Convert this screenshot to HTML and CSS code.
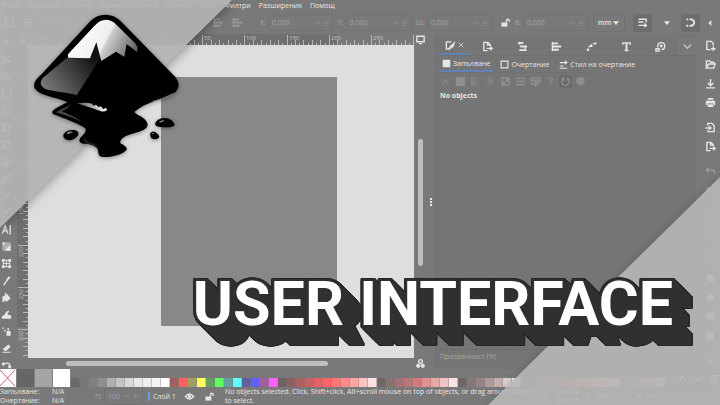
FILE: index.html
```html
<!DOCTYPE html>
<html lang="bg">
<head>
<meta charset="utf-8">
<title>User interface</title>
<link rel="stylesheet" href="styles.css">
</head>
<body>
<svg class="defs" aria-hidden="true">
  <symbol id="doc" viewBox="0 0 12 12"><path d="M6 10.500H2V1.500H6.500L9 4V5.500M6 1.500V4.500H9M5 8H11M9 6L11 8L9 10"/></symbol>
  <symbol id="newdoc" viewBox="0 0 12 12"><path d="M6 10.500H2V1.500H7L9 3.500V6M9 7V12M6.500 9.500H11.500"/></symbol>
  <symbol id="import" viewBox="0 0 12 12"><path d="M3 4V1.500H7.500L10 4V10.500H3V9M0.500 6.500H6M4.500 4.500L6.500 6.500L4.500 8.500"/></symbol>
  <symbol id="folder" viewBox="0 0 12 12"><path d="M1.500 10V2H5L6 3.500H9.500V5M1.500 10L4 5.500H11L9.500 10Z"/></symbol>
  <symbol id="save" viewBox="0 0 12 12"><path d="M6 1V8M3 5.500L6 8.500L9 5.500M1 10.800H11"/></symbol>
  <symbol id="print" viewBox="0 0 12 12"><path class="solid" d="M3 1H9V3H3ZM1 4H11V9H9.500V7H2.500V9H1ZM3 8H9V11H3Z"/></symbol>
  <symbol id="undo" viewBox="0 0 12 12"><path d="M4 2L1.500 4.500L4 7M2 4.500H8Q11 4.500 10.500 9"/></symbol>
  <symbol id="lock" viewBox="0 0 12 12"><path class="solid" d="M2.500 5.500H9.500V11H2.500Z"/><path d="M4 6V3.500Q4 1.500 6 1.500T8 3.500V6"/></symbol>
  <symbol id="unlock" viewBox="0 0 12 12"><path class="solid" d="M1.500 6H8V10.500H1.500Z"/><path d="M7 6V4Q7 2.500 8.500 2.500T10 4V5.500"/></symbol>
  <symbol id="layers" viewBox="0 0 12 12"><path class="thick" d="M1 2H7M3.500 6H11M2.500 10H10.500"/><path d="M3 2V4M9 6V9"/></symbol>
  <symbol id="align" viewBox="0 0 12 12"><path d="M1.500 1V11"/><path class="thick" d="M2 2.500H7.500M2 6H11M2 9.500H8.500"/></symbol>
  <symbol id="nodes" viewBox="0 0 12 12"><path class="thick" d="M1 10H3.500M4 5.500H7M9 2.500H11.500"/><path stroke-dasharray="2 1" d="M2 10Q3 4 11 2.500"/></symbol>
  <symbol id="type" viewBox="0 0 12 12"><path d="M2 4V2H10V4M4 10.300H8"/><path class="thick" d="M6 2V10.500"/></symbol>
  <symbol id="target" viewBox="0 0 12 12"><path d="M3 7V5.500A3.800 3.800 0 1 1 7 9.300M1 8.500H4.500V11H1Z"/><circle class="solid" cx="6.800" cy="5.500" r="1.600"/></symbol>
  <symbol id="down" viewBox="0 0 12 12"><path d="M2 4L6 8L10 4"/></symbol>
  <symbol id="up" viewBox="0 0 12 12"><path d="M2 8L6 4L10 8"/></symbol>
  <symbol id="menu" viewBox="0 0 12 12"><path d="M2 3H10M2 6H10M2 9H10"/></symbol>
  <symbol id="close" viewBox="0 0 12 12"><path d="M2.500 2.500L9.500 9.500M9.500 2.500L2.500 9.500"/></symbol>
  <symbol id="fill" viewBox="0 0 12 12"><path d="M1 2H7M1.500 2V10H4"/><path class="solid" d="M11.500 1L9.500 7L4.500 11L3 10L6 6Z"/></symbol>
  <symbol id="swap" viewBox="0 0 12 12"><path d="M1 3.500H10M8 1L10.500 3.500L8 5.500M1 8H6M1 11H11"/></symbol>
  <symbol id="square" viewBox="0 0 12 12"><path d="M1.500 1.500H10.500V10.500H1.500Z"/></symbol>
  <symbol id="block" viewBox="0 0 12 12"><path class="solid" d="M1 1H11V11H1Z"/></symbol>
  <symbol id="linear" viewBox="0 0 12 12"><path class="solid" d="M1 1H5V11H1Z"/><path class="solid half" d="M5 1H9V11H5Z"/></symbol>
  <symbol id="radial" viewBox="0 0 12 12"><path class="solid half" d="M2 2H10V10H2Z"/><path class="solid" d="M4 4H8V8H4Z"/></symbol>
  <symbol id="mesh" viewBox="0 0 12 12"><path d="M2 2H10V10H2Z"/><path class="solid" d="M6 2H10V6H2V10H6Z"/></symbol>
  <symbol id="waves" viewBox="0 0 12 12"><path d="M1 3L3 2L5 3L7 2L9 3L11 2M1 6.500L3 5.500L5 6.500L7 5.500L9 6.500L11 5.500M1 10L3 9L5 10L7 9L9 10L11 9"/></symbol>
  <symbol id="swatch" viewBox="0 0 12 12"><path d="M1.500 2H10.500V6M1.500 2V9H5M1.500 4.500H10.500M5 6L10 7L6 10.500Z"/></symbol>
  <symbol id="help" viewBox="0 0 12 12"><path d="M4 4Q4 2 6 2T8 4Q8 5.500 6 6.500V8M6 9V10.500"/></symbol>
  <symbol id="heart" viewBox="0 0 12 12"><path class="solid" d="M6 11Q1 8 1.300 4Q2 1 4 1.300L6 2.300L8 1.300Q10 1 10.700 4Q11 8 6 11Z"/></symbol>
  <symbol id="ring" viewBox="0 0 12 12"><path d="M4 2Q1.500 3 2 7Q3 10 6 10.500Q9 10 10 7Q10.500 3 8 2M4 1.500V5M8 1.500V5"/></symbol>
  <symbol id="snap" viewBox="0 0 12 12"><path d="M1.500 2.500H10V6M1.500 5.500H7"/><path d="M1.500 9.200H10M8 7L10.300 9.200L8 11"/></symbol>
  <symbol id="magnet" viewBox="0 0 12 12"><path class="thick" d="M5 2.500H6.500A3.500 3.500 0 0 1 6.500 9.500H5M1.500 2.500H3.500M1.500 9.500H3.500"/></symbol>
  <symbol id="caret" viewBox="0 0 12 12"><path class="solid" d="M1.500 3.500H10.500L6 9Z"/></symbol>
  <symbol id="left" viewBox="0 0 12 12"><path class="solid" d="M8 1.500V10.500L3.500 6Z"/></symbol>
  <symbol id="right" viewBox="0 0 12 12"><path class="solid" d="M4 1.500V10.500L8.500 6Z"/></symbol>
  <symbol id="pm" viewBox="0 0 20 12"><path d="M1 6H8M12 6H19M15.500 2.500V9.500"/></symbol>
  <symbol id="eye" viewBox="0 0 12 12"><path d="M1.500 6Q6 0.500 10.500 6Q6 11.500 1.500 6Z"/><circle class="solid" cx="6" cy="6" r="1.800"/></symbol>
  <symbol id="monitor" viewBox="0 0 12 12"><path d="M2 2.500H10V8.500H2ZM4.500 10.500H7.500"/></symbol>
  <symbol id="cms" viewBox="0 0 12 12"><circle cx="6" cy="3.800" r="2"/><circle class="solid" cx="3.500" cy="8.500" r="2.300"/><circle class="solid" cx="8.500" cy="8.500" r="2.300"/></symbol>
  <symbol id="pointer" viewBox="0 0 12 12"><path class="solid" d="M3 1L10 7H6.500L5 11Z"/></symbol>
  <symbol id="node" viewBox="0 0 12 12"><path d="M1 2L4 5L2 11M4 5L10 2"/><path class="solid" d="M5 5L11 9L7 10Z"/></symbol>
  <symbol id="shape" viewBox="0 0 12 12"><path d="M1.500 2H7V6H10.500V10.500H5V7H1.500Z"/></symbol>
  <symbol id="circle" viewBox="0 0 12 12"><circle cx="6" cy="6" r="4"/></symbol>
  <symbol id="star" viewBox="0 0 12 12"><path d="M5 1L7 4L11 5L8 7L8 11L5 9L2 10L3 6L1 3L4 4Z"/></symbol>
  <symbol id="spiral" viewBox="0 0 12 12"><path d="M6 6Q8 4 8 7Q6 10 3.500 7Q3 2 7 2Q12 4 10 8Q6 13 1.500 9"/></symbol>
  <symbol id="pen" viewBox="0 0 12 12"><path d="M1 11L3 6L9 1L11 3L6 9Z"/></symbol>
  <symbol id="texttool" viewBox="0 0 12 12"><path d="M1.500 10.500L4.500 2L7.500 10.500M2.500 7.500H6.500M10 1V11.500"/></symbol>
  <symbol id="gradient" viewBox="0 0 12 12"><path class="solid half" d="M1.500 1.500H10.500V10.500H1.500Z"/><path class="solid" d="M1.500 1.500H5L2 5ZM10.500 4L4 10.500H10.500Z"/></symbol>
  <symbol id="meshtool" viewBox="0 0 12 12"><path stroke-width="1" d="M2.500 2.500H9.500V9.500H2.500ZM6 2V10M2 6H10"/><path class="solid" d="M1 1H4V4H1ZM8 1H11V4H8ZM1 8H4V11H1ZM8 8H11V11H8Z"/></symbol>
  <symbol id="dropper" viewBox="0 0 12 12"><path class="thick" d="M6.500 5.500L9.500 2"/><path d="M3 11L7 5"/></symbol>
  <symbol id="bucket" viewBox="0 0 12 12"><path class="solid" d="M2 5L7 2.500L10.500 7L6 10.500L3.500 9V11H1.500V5Z"/><path d="M5 5V1"/></symbol>
  <symbol id="tweak" viewBox="0 0 12 12"><path class="solid" d="M1 10.500V8Q4 7 5 4Q8 0.500 9 3L7 5Q7 6.500 11 7V10.500Z"/></symbol>
  <symbol id="spray" viewBox="0 0 12 12"><path class="solid" d="M6 6Q8 4 10.500 6V10.500H6ZM7 2.500H9V4H7ZM1.500 1.500H3V3H1.500ZM3.500 4H5V6H3.500Z"/></symbol>
  <symbol id="eraser" viewBox="0 0 12 12"><path class="solid" d="M2 6.500L8 1.500L10.500 4L6 8.500H3.500ZM1.500 9.500H10.500V10.500H1.500Z"/></symbol>
  <symbol id="connector" viewBox="0 0 12 12"><path class="solid" d="M1 3H4V6H1ZM8 6H11V9H8Z"/><path d="M3 4Q10 2 9.500 7"/></symbol>
  <symbol id="zoom" viewBox="0 0 12 12"><circle class="solid" cx="6" cy="5.500" r="4"/><path d="M8 8L10.500 10.500"/></symbol>
</svg>

<div class="app">
  <nav class="menubar">
    <a href="#">Файл</a><a href="#">Редакция</a><a href="#">Изглед</a><a href="#">Слоеве</a><a href="#">Обекти</a><a href="#">Пътеки</a><a href="#">Текст</a><a href="#">Филтри</a><a href="#">Разширения</a><a href="#">Помощ</a>
  </nav>

  <header class="toolbar">
    <div class="quick">
      <svg class="icon"><use href="#square"/></svg><svg class="icon"><use href="#menu"/></svg><svg class="icon dim"><use href="#undo"/></svg><svg class="icon dim"><use href="#shape"/></svg>
      <svg class="icon dim push"><use href="#align"/></svg><svg class="icon dim"><use href="#align"/></svg>
    </div>
    <label class="field">X:<span class="spin"><input type="text" value="0,000"><svg class="pm"><use href="#pm"/></svg></span></label>
    <label class="field">Y:<span class="spin"><input type="text" value="0,000"><svg class="pm"><use href="#pm"/></svg></span></label>
    <label class="field">Ш:<span class="spin"><input type="text" value="0,000"><svg class="pm"><use href="#pm"/></svg></span></label>
    <button class="plain" aria-label="Lock ratio"><svg class="icon"><use href="#unlock"/></svg></button>
    <label class="field">В:<span class="spin"><input type="text" value="0,000"><svg class="pm"><use href="#pm"/></svg></span></label>
    <span class="unit"><select aria-label="Unit"><option>mm</option></select><svg class="mini"><use href="#caret"/></svg></span>
    <button class="pressed" aria-label="Scale stroke"><svg class="icon"><use href="#snap"/></svg></button>
    <button class="plain wide" aria-label="Options"><svg class="mini"><use href="#caret"/></svg></button>
    <button class="pressed" aria-label="Snap"><svg class="icon"><use href="#magnet"/></svg></button>
    <button class="plain wide" aria-label="Expand"><svg class="mini"><use href="#left"/></svg></button>
  </header>

  <main class="work">
    <aside class="tools" id="tools"></aside>
    <section class="editor">
      <div class="corner"><svg class="mini"><use href="#lock"/></svg></div>
      <div class="ruler-h"><svg id="ruler-h"></svg></div>
      <div class="side-top"><svg class="icon"><use href="#monitor"/></svg></div>
      <div class="ruler-v"><svg id="ruler-v"></svg></div>
      <div class="canvas"><div class="page"></div></div>
      <div class="scroll-v"><div class="thumb-v"></div></div>
      <div class="scroll-h"><div class="thumb-h"></div></div>
      <div class="side-bottom"><svg class="icon"><use href="#cms"/></svg></div>
    </section>
    <div class="splitter"><i></i><i></i><i></i></div>
    <section class="dock">
      <div class="dock-tabs">
        <button class="tab active" aria-label="Fill and stroke"><svg class="icon"><use href="#fill"/></svg><svg class="x"><use href="#close"/></svg></button>
        <button class="tab" aria-label="Export"><svg class="icon"><use href="#doc"/></svg></button>
        <button class="tab" aria-label="Layers"><svg class="icon"><use href="#layers"/></svg></button>
        <button class="tab" aria-label="Align"><svg class="icon"><use href="#align"/></svg></button>
        <button class="tab" aria-label="Path"><svg class="icon"><use href="#nodes"/></svg></button>
        <button class="tab" aria-label="Text"><svg class="icon"><use href="#type"/></svg></button>
        <button class="tab" aria-label="Transform"><svg class="icon"><use href="#target"/></svg></button>
        <button class="more" aria-label="More"><svg class="icon soft"><use href="#down"/></svg></button>
      </div>
      <div class="paint-tabs">
        <button class="ptab active"><svg class="small"><use href="#block"/></svg>Запълване</button>
        <button class="ptab"><svg class="small"><use href="#square"/></svg>Очертание</button>
        <button class="ptab"><svg class="small"><use href="#swap"/></svg>Стил на очертание</button>
      </div>
      <div class="paint-types">
        <svg class="faint"><use href="#close"/></svg><svg><use href="#block"/></svg><svg class="faint"><use href="#linear"/></svg><svg class="faint"><use href="#radial"/></svg><svg><use href="#mesh"/></svg><svg><use href="#waves"/></svg><svg><use href="#swatch"/></svg><svg><use href="#help"/></svg><svg class="sel"><use href="#ring"/></svg><svg><use href="#heart"/></svg>
      </div>
      <p class="empty">No objects</p>
      <div class="opacity">Прозрачност (%)</div>
    </section>
    <aside class="commands">
      <button aria-label="New"><svg class="icon"><use href="#newdoc"/></svg></button>
      <button aria-label="Open"><svg class="icon"><use href="#folder"/></svg></button>
      <button aria-label="Save"><svg class="icon"><use href="#save"/></svg></button>
      <button aria-label="Print"><svg class="icon"><use href="#print"/></svg></button>
      <button class="group" aria-label="Import"><svg class="icon"><use href="#import"/></svg></button>
      <button aria-label="Export"><svg class="icon"><use href="#doc"/></svg></button>
      <button class="group off" aria-label="Undo"><svg class="icon"><use href="#undo"/></svg></button>
      <button class="off" aria-label="Redo"><svg class="icon"><use href="#undo"/></svg></button>
      <button class="group off" aria-label="Copy"><svg class="icon"><use href="#shape"/></svg></button>
      <button class="off" aria-label="Cut"><svg class="icon"><use href="#shape"/></svg></button>
      <button class="off" aria-label="Paste"><svg class="icon"><use href="#doc"/></svg></button>
      <button class="group" aria-label="Zoom selection"><svg class="icon"><use href="#zoom"/></svg></button>
      <button aria-label="Zoom drawing"><svg class="icon"><use href="#zoom"/></svg></button>
      <button aria-label="Zoom page"><svg class="icon"><use href="#zoom"/></svg></button>
      <button aria-label="Duplicate"><svg class="mini"><use href="#block"/></svg></button>
      <button class="group" aria-label="More"><svg class="mini"><use href="#right"/></svg></button>
    </aside>
  </main>

  <div class="palette">
    <div class="none"><svg viewBox="0 0 16 18" preserveAspectRatio="none"><path d="M0 1L15 17M15 1L0 17"/></svg></div>
    <div class="big dark"></div><div class="big grey"></div><div class="big white"></div>
    <div class="swatches" id="swatches"></div>
    <div class="palette-nav"><svg><use href="#up"/></svg><svg><use href="#down"/></svg><svg><use href="#menu"/></svg></div>
  </div>

  <footer class="status">
    <div class="style"><span>Запълване:</span><span>N/A</span><span>Очертание:</span><span>N/A</span></div>
    <label class="field">П:<span class="spin short"><input type="text" value="100"><svg class="pm"><use href="#pm"/></svg></span></label>
    <button class="layer">Слой 1</button>
    <button class="plain" aria-label="Visible"><svg class="icon"><use href="#eye"/></svg></button>
    <button class="plain" aria-label="Unlock"><svg class="icon"><use href="#unlock"/></svg></button>
    <p class="message">No objects selected. Click, Shift+click, Alt+scroll mouse on top of objects, or drag around objects to select.</p>
    <div class="coords"><span>X:</span><span>149,72</span><span>Y:</span><span>321,05</span></div>
    <div class="zoomer">Z: <span>42%</span><svg class="pm"><use href="#pm"/></svg></div>
    <div class="zoomer">R: <span>0,00°</span><svg class="pm"><use href="#pm"/></svg></div>
  </footer>
</div>

<div class="veil veil-start"><div></div></div>
<div class="veil veil-end"><div></div></div>

<svg class="logo" viewBox="0 0 510 495" role="img" aria-label="Inkscape">
  <defs>
    <linearGradient id="snow" gradientUnits="userSpaceOnUse" x1="160" y1="80" x2="345" y2="175"><stop offset="0" stop-color="#fff"/><stop offset=".5" stop-color="#eee"/><stop offset=".54" stop-color="#ccc"/><stop offset="1" stop-color="#555"/></linearGradient>
    <linearGradient id="slope" gradientUnits="userSpaceOnUse" x1="80" y1="270" x2="220" y2="170"><stop offset="0" stop-color="#777"/><stop offset="1" stop-color="#111"/></linearGradient>
    <linearGradient id="glint" x1="0" x2="1"><stop offset="0" stop-color="#555"/><stop offset="1" stop-color="#fff"/></linearGradient>
  </defs>
  <path d="M257 44Q282 44 301 62L464 229C480 247 481 268 459 281C430 297 378 305 343 336C355 350 380 352 383 374C382 392 350 396 328 404C308 410 299 420 301 430C312 436 322 442 320 449C308 464 270 474 244 470C228 465 242 450 225 438C208 427 182 437 178 422C178 408 200 404 197 386C180 372 130 355 101 343C88 335 104 326 142 307C112 292 58 288 44 265C37 246 54 233 66 221L212 62Q230 44 257 44Z"/>
  <path fill="url(#slope)" d="M229 127L210 175L143 172L68 234Q53 254 74 266C105 277 145 276 170 286L244 170Z"/>
  <path fill="url(#snow)" d="M146 173Q140 166 148 158L222 79Q254 44 287 72L341 125Q357 139 351 156L320 132L313 170L288 155L244 183L229 127L210 175Z"/>
  <path fill="url(#glint)" d="M171 310Q199 306 216 311L220 317L228 314L236 321L243 319L250 328L258 323L261 330Q252 338 239 332Q211 323 171 310Z"/>
  <path fill="#444" d="M108 337Q127 325 153 314Q139 329 125 334Q150 343 188 365Q150 350 108 337Z"/>
  <path fill="#222" d="M190 410Q199 425 216 429Q232 434 239 453Q226 438 208 432Q191 430 190 410Z"/>
  <path fill="#777" d="M461 278Q433 294 391 304Q420 302 461 284Z"/>
  <path d="M130 405Q137 388 164 390Q181 395 173 408Q153 428 135 417Q128 413 130 405Z"/>
  <path d="M390 402Q394 391 406 396Q421 407 417 413Q404 422 393 413Z"/>
  <path d="M405 372Q410 355 433 354Q457 355 464 374Q460 383 433 382Q407 382 405 372Z"/>
  <path fill="#888" d="M140 399Q148 392 160 396Q149 402 141 402ZM418 365Q425 359 434 361Q430 367 419 368ZM394 400L401 398L402 403Z"/>
</svg>
<h1 class="title">USER INTERFACE</h1>
<script src="app.js"></script>
</body>
</html>
```
FILE: styles.css
```css
* { box-sizing: border-box; }
body { margin: 0; overflow: hidden; font-family: "Open Sans", "Noto Sans", sans-serif; font-size: 7px; line-height: 9px; color: #e6e6e6; background: #797979; }
button, input, select { font: inherit; color: inherit; border: 0; background: none; padding: 0; margin: 0; appearance: none; }
p { margin: 0; }
svg { fill: none; stroke: currentColor; stroke-width: 1.5; flex: none; display: block; }
.solid { fill: currentColor; stroke: none; }
.half { opacity: .5; }
.thick { stroke-width: 2; }
.defs { position: absolute; width: 0; height: 0; }
.icon { width: 11px; height: 11px; }
.small { width: 9px; height: 9px; }
.mini { width: 8px; height: 8px; }
.dim { opacity: .3; }
.soft { opacity: .7; }
.app { height: 100vh; display: grid; grid-template-rows: 11px 23px minmax(0, 1fr) 18px 18px; }

.menubar { display: flex; gap: 8px; padding: 1px 2px; font-weight: 500; overflow: hidden; }
.menubar a { color: inherit; text-decoration: none; }

.toolbar { display: flex; align-items: center; }
.quick { flex: 1; display: flex; gap: 8px; padding: 0 17px 0 4px; }
.push { margin-left: auto; }
.field { display: flex; align-items: center; gap: 2px; color: #a5a5a5; margin-right: 4px; }
.spin { display: flex; align-items: center; width: 66px; height: 17px; padding: 0 2px 0 3px; border: 1px solid #727272; border-radius: 3px; }
.spin input { min-width: 0; flex: 1; }
.pm { width: 18px; height: 10px; stroke: #8f8f8f; stroke-width: 1; }
.plain { width: 18px; display: grid; place-items: center; }
.wide { width: 29px; }
.toolbar > .wide:last-child { width: 20px; }
.pressed { width: 19px; height: 18px; display: grid; place-items: center; background: #6d6d6d; border-radius: 3px; }
.unit { display: flex; align-items: center; width: 32px; height: 18px; padding: 0 4px; border: 1px solid #707070; border-radius: 3px; margin-right: 8px; font-weight: 600; }
.unit select { flex: 1; min-width: 0; }

.work { display: grid; grid-template-columns: 17px minmax(0, 410fr) 8px minmax(0, 261fr) 24px; min-height: 0; }
.tools { display: flex; flex-direction: column; overflow: hidden; }
.tools button { flex: none; height: 17px; width: 13px; display: grid; place-items: center; }
.editor { display: grid; grid-template-columns: 11px minmax(0, 1fr) 13px; grid-template-rows: 11px minmax(0, 1fr) 11px; min-height: 0; }
.corner, .side-top, .side-bottom { display: grid; place-items: center; }
.ruler-h, .ruler-v { overflow: hidden; }
.ruler-h { background: linear-gradient(to right, #6f6f6f 80%, #7a7a7a 80%); }
.ruler-v { background: linear-gradient(#6f6f6f 90%, #7a7a7a 90%); }
.ruler-h svg, .ruler-v svg { width: 100%; height: 100%; stroke: #b5b5b5; stroke-width: 1; }
.ruler-h text, .ruler-v text { fill: #c4c4c4; stroke: none; font-size: 6px; }
.canvas { background: #dedede; display: flex; padding: 32px 20% 32px 133px; }
.page { flex: 1; background: #888; }
.scroll-v { padding: 94px 4px 92px; display: flex; }
.thumb-v { flex: 1; background: #bebebe; border-radius: 3px; }
.scroll-h { grid-column: 1 / 3; padding: 3px 86px 3px 49px; display: flex; }
.thumb-h { flex: 1; background: #bebebe; border-radius: 3px; }
.splitter { display: flex; flex-direction: column; align-items: center; justify-content: center; gap: 1px; }
.splitter i { width: 2px; height: 2px; background: #e6e6e6; }
.dock { background: #757575; border-left: 1px solid #717171; display: flex; flex-direction: column; min-width: 0; padding-top: 3px; }
.dock-tabs { display: flex; height: 19px; padding-left: 3px; border-bottom: 1px solid #707070; }
.tab { flex: 1; display: flex; align-items: center; justify-content: center; gap: 1px; }
.tab.active { flex: 0 0 31px; border-bottom: 2px solid #6080b8; }
.tab .x { width: 8px; height: 8px; opacity: .7; }
.more { width: 18px; display: grid; place-items: center; background: #797979; }
.paint-tabs { display: flex; gap: 4px; height: 17px; padding-left: 3px; border-bottom: 1px solid #717171; font-weight: 500; }
.ptab { display: flex; align-items: center; gap: 2px; padding: 0 3px; white-space: nowrap; }
.ptab.active { border-bottom: 2px solid #6080b8; }
.paint-types { display: flex; gap: 4px; padding: 3px 4px 0; color: #8e8e8e; }
.paint-types svg { width: 11px; height: 11px; }
.paint-types .faint { opacity: .6; }
.sel { background: #6b6b6b; outline: 1px solid #6b6b6b; border-radius: 1px; }
.empty { padding: 4px; font-weight: 700; }
.opacity { margin-top: auto; padding: 2px 4px; border-top: 1px solid #6d6d6d; color: #a5a5a5; height: 20px; }
.commands { display: flex; flex-direction: column; align-items: center; padding: 2px 0 0 4px; overflow: hidden; }
.commands button { flex: none; height: 19px; display: grid; place-items: center; }
.commands .group { height: 25px; padding-top: 6px; }
.off { opacity: .3; }

.palette { display: flex; align-items: flex-end; }
.none, .big { height: 18px; width: 18px; flex: none; border-right: 1px solid #808080; }
.none { width: 17px; background: #fff; color: #d06070; }
.none svg { width: 16px; height: 18px; stroke-width: 1; }
.dark { background: #666; }
.grey { background: #a5a5a5; }
.white { background: #fff; }
.swatches { display: flex; flex: 1; min-width: 0; overflow: hidden; }
.swatches span { flex: none; width: 9px; height: 9px; border-right: 1px solid #80808066; }
.palette-nav { display: flex; gap: 5px; align-self: center; }
.palette-nav svg { width: 11px; height: 11px; }

.status { display: flex; align-items: center; overflow: hidden; white-space: nowrap; }
.style { display: grid; grid-template-columns: 52px 43px; }
.layer { border-left: 2px solid #6e96f0; padding-left: 3px; width: 32px; text-align: left; }
.status .field { margin-right: 5px; }
.short { width: 39px; }
.status .plain { width: 20px; }
.message { flex: 0 0 auto; width: 45%; padding-left: 5px; white-space: normal; }
.coords { display: grid; grid-template-columns: 13px 28px; }
.zoomer { display: flex; align-items: center; gap: 4px; margin-right: 5px; }

.veil { position: absolute; width: 232px; height: 228px; pointer-events: none; }
.veil div { height: 100%; background: #b8b8b8e6; }
.veil-start { left: 0; top: 0; filter: drop-shadow(2px 2px 5px #0005); }
.veil-start div { clip-path: polygon(0 0, 100% 0, 0 100%); }
.veil-end { right: 0; bottom: 0; filter: drop-shadow(-1px -1px 3px #0002); }
.veil-end div { clip-path: polygon(100% 0, 100% 100%, 0 100%); }
.logo { position: absolute; left: 20px; top: 0; width: 170px; height: 165px; fill: #000; stroke: none; filter: drop-shadow(0 1px 2px #0006); }
.title {
  position: absolute; right: 47px; bottom: 65px; margin: 0;
  font: 700 61px/72px Roboto, "Open Sans", sans-serif; color: #fff; white-space: nowrap;
  -webkit-text-stroke: 4px #303030; paint-order: stroke fill; stroke-linejoin: round;
  filter: drop-shadow(1px 1px #303030) drop-shadow(2px 2px #303030) drop-shadow(4px 4px #303030) drop-shadow(8px 8px #303030) drop-shadow(3px 3px #303030)
    drop-shadow(1px 0 #262626) drop-shadow(-1px 0 #262626) drop-shadow(0 1px #262626) drop-shadow(0 -1px #262626);
}
```
FILE: app.js
```js
const tools = ["pointer", "node", "shape", "square", "circle", "star", "mesh", "spiral", "pen", "dropper", "nodes", "texttool", "gradient", "meshtool", "dropper", "bucket", "tweak", "spray", "eraser", "connector"];
document.getElementById("tools").innerHTML = tools
  .map((name) => `<button aria-label="${name}"><svg class="icon"><use href="#${name}"/></svg></button>`)
  .join("");

const colors = ("6a6a6a 777777 808080 8e8e8e b0b0b0 c4c4c4 d8d8d8 e8e8e8 eeeeee f4f4f4 ffffff " +
  "a06060 ff6060 a0a060 ffff60 60a060 60ff60 60a0a0 60ffff 6060a0 6060ff a060a0 ff60ff " +
  "706060 8b6060 a86262 c76262 e46262 ff6262 ff7676 ff8b8b ffa5a5 ffc4c4 ffe2e2 " +
  "706868 8a7070 a07474 ba7676 d47a7a e09090 e8a8a8 f0c4c4 fae2e2 " +
  "6c6868 857878 948484 b09a9a c4b0b0 dcd0d0 f0f0f0 777777 8a7060 a07860 b87860 d07860 e88060 ff9070 ffa080 ffb090 ffc0a8 ffd0c0 " +
  "777777 a08870 c09878 d8a888 e8b898").split(" ");
document.getElementById("swatches").innerHTML = colors
  .map((color) => `<span style="background:#${color}"></span>`)
  .join("");

// Ruler scale: 50 units span 42px; the origin is the page corner.
const step = 42.2;
function ruler(id, origin, vertical) {
  const svg = document.getElementById(id);
  const box = svg.getBoundingClientRect();
  const length = vertical ? box.height : box.width;
  let path = "";
  let labels = "";
  for (let i = -40; i < 400; i++) {
    const at = Math.round(origin + (i * step) / 10);
    if (at < 0 || at > length) continue;
    const start = i % 10 === 0 ? 1 : i % 2 === 0 ? 6 : 9;
    path += vertical ? `M${start} ${at + 0.5}H11` : `M${at + 0.5} ${start}V11`;
    if (i % 10 === 0 && at + 14 < length) {
      const value = i * 5;
      labels += vertical
        ? `<text transform="translate(6 ${at + 2}) rotate(-90)" text-anchor="end">${value}</text>`
        : `<text x="${at + 2}" y="6">${value}</text>`;
    }
  }
  svg.innerHTML = `<path d="${path}"/>${labels}`;
}
ruler("ruler-h", 132, false);
ruler("ruler-v", 31, true);
```
